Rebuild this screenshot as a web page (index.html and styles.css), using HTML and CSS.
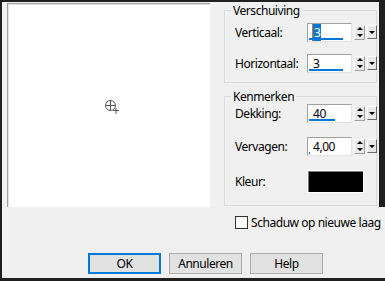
FILE: index.html
```html
<!DOCTYPE html>
<html>
<head>
<meta charset="utf-8">
<link rel="stylesheet" href="styles.css">
</head>
<body>
<div class="dialog">
  <div class="main">
    <div class="preview">
      <svg class="cursor" width="18" height="18" viewBox="0 0 18 18">
        <circle cx="7.5" cy="7.5" r="5" fill="none" stroke="#555" stroke-width="1"/>
        <path d="M7.5 2.5V12.5M2.5 7.5H12.5" stroke="#555" stroke-width="1"/>
        <path d="M10 12.5H16M13 10V16" stroke="#555" stroke-width="1"/>
      </svg>
    </div>
    <div class="side">
      <div class="group g1">
        <div class="title">Verschuiving</div>
        <div class="row">
          <span class="lbl">Verticaal:</span>
          <div class="edit"><span class="sel">3</span><i class="bar" style="width:34px"></i></div>
          <div class="spin"><span class="up"></span><span class="down"></span></div>
          <div class="drop"><span class="down"></span></div>
        </div>
        <div class="row">
          <span class="lbl">Horizontaal:</span>
          <div class="edit"><span class="val">3</span><i class="bar" style="width:34px"></i></div>
          <div class="spin"><span class="up"></span><span class="down"></span></div>
          <div class="drop"><span class="down"></span></div>
        </div>
      </div>
      <div class="group g2">
        <div class="title">Kenmerken</div>
        <div class="row">
          <span class="lbl">Dekking:</span>
          <div class="edit"><span class="val">40</span><i class="bar" style="width:26px"></i></div>
          <div class="spin"><span class="up"></span><span class="down"></span></div>
          <div class="drop"><span class="down"></span></div>
        </div>
        <div class="row">
          <span class="lbl">Vervagen:</span>
          <div class="edit"><span class="val">4,00</span><i class="bar" style="width:1px"></i></div>
          <div class="spin"><span class="up"></span><span class="down"></span></div>
          <div class="drop"><span class="down"></span></div>
        </div>
        <div class="row color-row">
          <span class="lbl">Kleur:</span>
          <div class="swatch"></div>
        </div>
      </div>
    </div>
    <div class="edge"></div>
  </div>
  <div class="check"><span class="box"></span><span>Schaduw op nieuwe laag</span></div>
  <div class="buttons">
    <div class="btn default">OK</div>
    <div class="btn">Annuleren</div>
    <div class="btn">Help</div>
  </div>
</div>
</body>
</html>
```
FILE: styles.css
```css
html, body {
  margin: 0;
  padding: 0;
  background: #1f1f1f;
}
body {
  width: 385px;
  height: 281px;
  overflow: hidden;
  font-family: "Noto Sans", "Open Sans", sans-serif;
  font-size: 12px;
  letter-spacing: -0.45px;
  color: #000;
}
.dialog {
  margin: 2px 0 0 2px;
  height: 276px;
  background: #f0f0f0;
  display: flex;
  flex-direction: column;
}
.main {
  display: flex;
  padding: 1px 0 0 5px;
}
.preview {
  position: relative;
  flex-shrink: 0;
  width: 202px;
  height: 203px;
  background: #fff;
  border-top: 1px solid #a0a0a0;
  border-left: 1px solid #a0a0a0;
  box-shadow: inset 1px 1px 0 #e3e3e3;
}
.cursor {
  position: absolute;
  left: 95px;
  top: 94px;
}
.side {
  flex-shrink: 0;
  margin-left: 14px;
  width: 153px;
  display: flex;
  flex-direction: column;
}
.edge {
  flex: 1;
  margin: -3px 0 0 2px;
  background: #1f1f1f;
}
.group {
  border: 1px solid #dcdcdc;
  padding: 0 0 0 10px;
}
.g1 {
  margin-top: 7px;
  height: 71px;
}
.g2 {
  margin-top: 13px;
  height: 108px;
}
.title {
  width: fit-content;
  margin: -8px 0 0 -4px;
  padding: 0 2px;
  background: #f0f0f0;
  line-height: 15px;
}
.row {
  display: flex;
  align-items: center;
  height: 20px;
}
.g1 .row:nth-of-type(2) { margin-top: 4px; }
.g1 .row + .row { margin-top: 11px; }
.g2 .row:nth-of-type(2) { margin-top: -1px; }
.g2 .row + .row { margin-top: 13px; }
.g2 .color-row { margin-top: 13px; height: 24px; }
.lbl {
  width: 72px;
  flex-shrink: 0;
  line-height: 15px;
}
.edit {
  position: relative;
  flex-shrink: 0;
  box-sizing: border-box;
  width: 45px;
  height: 19px;
  background: #fff;
  border: 1px solid #a0a0a0;
  border-right-color: #e3e3e3;
  border-bottom-color: #e3e3e3;
  padding-left: 5px;
  line-height: 17px;
}
.sel {
  background: #0078d7;
  color: #fff;
  padding: 0 1px;
  box-shadow: -1px 0 0 #e07020;
}
.bar {
  position: absolute;
  left: 1px;
  bottom: 1px;
  height: 2px;
  background: #0078d7;
}
.spin {
  flex-shrink: 0;
  margin-left: 2px;
  width: 9px;
  height: 13px;
  display: flex;
  flex-direction: column;
  justify-content: space-around;
  align-items: center;
  background: #e8e8e8;
  border: 1px solid #fff;
  border-right-color: #a0a0a0;
  border-bottom-color: #a0a0a0;
}
.drop {
  flex-shrink: 0;
  margin-left: 2px;
  width: 8px;
  height: 12px;
  display: flex;
  align-items: center;
  justify-content: center;
  background: #e8e8e8;
  border: 1px solid #fff;
  border-right-color: #696969;
  border-bottom-color: #696969;
}
.up, .down {
  width: 0;
  height: 0;
  border-left: 3px solid transparent;
  border-right: 3px solid transparent;
}
.up { border-bottom: 3px solid #000; }
.down { border-top: 3px solid #000; }
.swatch {
  flex-shrink: 0;
  box-sizing: border-box;
  width: 57px;
  height: 23px;
  background: #000;
  border: 1px solid #fff;
  box-shadow: inset 1px 1px 0 #777;
}
.check {
  display: flex;
  align-items: center;
  margin: 7px 0 0 233px;
  height: 16px;
  white-space: nowrap;
}
.box {
  flex-shrink: 0;
  box-sizing: border-box;
  width: 13px;
  height: 13px;
  border: 1px solid #333;
  background: #fff;
  margin-right: 3px;
}
.buttons {
  display: flex;
  gap: 8px;
  margin: 23px 0 0 86px;
}
.btn {
  box-sizing: border-box;
  width: 73px;
  height: 21px;
  background: #e1e1e1;
  border: 1px solid #adadad;
  text-align: center;
  line-height: 19px;
}
.btn.default {
  border: 2px solid #0078d7;
  line-height: 17px;
}
```
